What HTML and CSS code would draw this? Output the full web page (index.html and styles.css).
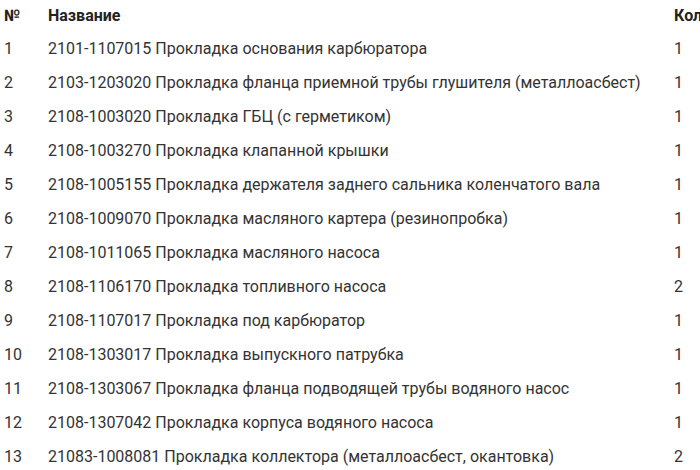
FILE: index.html
```html
<!DOCTYPE html>
<html lang="ru">
<head>
<meta charset="utf-8">
<link rel="stylesheet" href="styles.css">
</head>
<body>
<table class="parts">
  <thead>
    <tr><th class="num">№</th><th class="name">Название</th><th class="qty">Количество</th></tr>
  </thead>
  <tbody>
    <tr><td class="num">1</td><td class="name">2101-1107015 Прокладка основания карбюратора</td><td class="qty">1</td></tr>
    <tr><td class="num">2</td><td class="name">2103-1203020 Прокладка фланца приемной трубы глушителя (металлоасбест)</td><td class="qty">1</td></tr>
    <tr><td class="num">3</td><td class="name">2108-1003020 Прокладка ГБЦ (с герметиком)</td><td class="qty">1</td></tr>
    <tr><td class="num">4</td><td class="name">2108-1003270 Прокладка клапанной крышки</td><td class="qty">1</td></tr>
    <tr><td class="num">5</td><td class="name">2108-1005155 Прокладка держателя заднего сальника коленчатого вала</td><td class="qty">1</td></tr>
    <tr><td class="num">6</td><td class="name">2108-1009070 Прокладка масляного картера (резинопробка)</td><td class="qty">1</td></tr>
    <tr><td class="num">7</td><td class="name">2108-1011065 Прокладка масляного насоса</td><td class="qty">1</td></tr>
    <tr><td class="num">8</td><td class="name">2108-1106170 Прокладка топливного насоса</td><td class="qty">2</td></tr>
    <tr><td class="num">9</td><td class="name">2108-1107017 Прокладка под карбюратор</td><td class="qty">1</td></tr>
    <tr><td class="num">10</td><td class="name">2108-1303017 Прокладка выпускного патрубка</td><td class="qty">1</td></tr>
    <tr><td class="num">11</td><td class="name">2108-1303067 Прокладка фланца подводящей трубы водяного насос</td><td class="qty">1</td></tr>
    <tr><td class="num">12</td><td class="name">2108-1307042 Прокладка корпуса водяного насоса</td><td class="qty">1</td></tr>
    <tr><td class="num">13</td><td class="name">21083-1008081 Прокладка коллектора (металлоасбест, окантовка)</td><td class="qty">2</td></tr>
  </tbody>
</table>
</body>
</html>
```
FILE: styles.css
```css
html, body {
  margin: 0;
  padding: 0;
  background: #ffffff;
  overflow: hidden;
}
body {
  font-family: Roboto, "Liberation Sans", sans-serif;
  font-size: 16px;
  color: #333333;
}
.parts {
  border-collapse: collapse;
  table-layout: fixed;
  width: 800px;
}
.parts th, .parts td {
  padding: 0;
  text-align: left;
  white-space: nowrap;
  vertical-align: middle;
}
.parts th {
  font-weight: 700;
  color: #222222;
  height: 32px;
  line-height: 32px;
}
.parts td {
  height: 34px;
  line-height: 34px;
}
.parts .num {
  width: 44px;
  padding-left: 4px;
}
.parts .name {
  width: 624px;
}
.parts .qty {
  width: 130px;
  padding-left: 2px;
}
```
